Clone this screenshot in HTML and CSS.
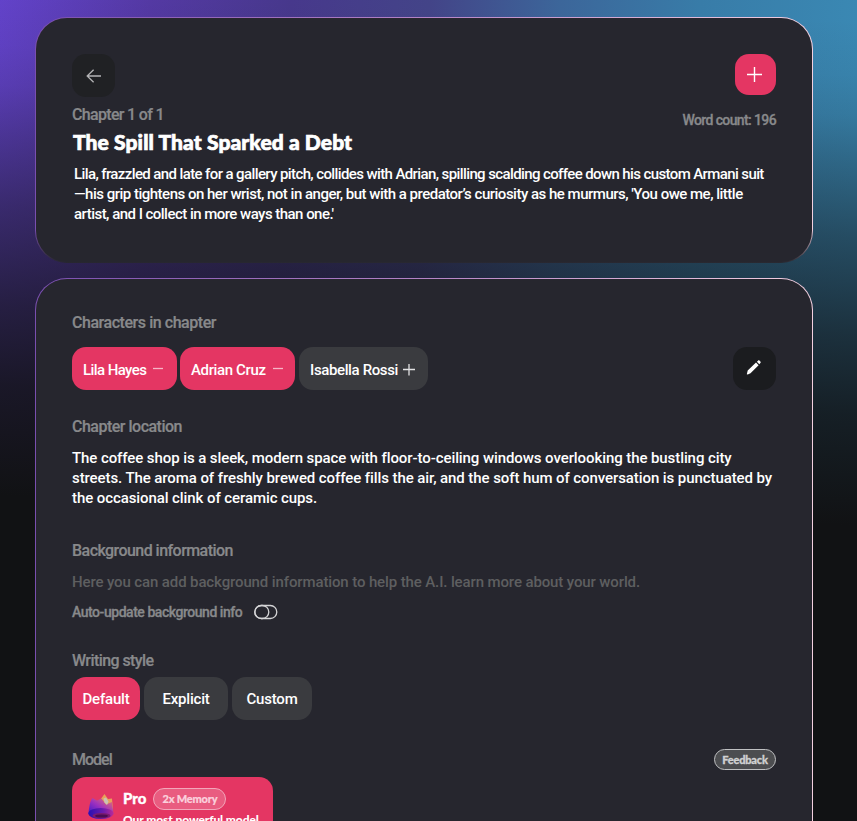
FILE: index.html
```html
<!DOCTYPE html>
<html lang="en">
<head>
<meta charset="utf-8">
<title>Chapter editor</title>
<link rel="stylesheet" href="styles.css">
</head>
<body>
<main class="page">
  <section class="card card-head">
    <div class="head-row">
      <div class="head-left">
        <button class="icon-btn back" aria-label="Back"><svg width="16" height="14" viewBox="0 0 16 14"><path d="M15 7H1.200M7.600 .8L1.200 7l6.400 6.200"/></svg></button>
        <span class="label chapter-no">Chapter 1 of 1</span>
        <h1 class="title">The Spill That Sparked a Debt</h1>
      </div>
      <div class="head-right">
        <button class="icon-btn add" aria-label="Add"><svg width="15" height="15" viewBox="0 0 15 15"><path d="M7.500 0v15M0 7.500h15"/></svg></button>
        <span class="count">Word count: 196</span>
      </div>
    </div>
    <p class="text summary"><span class="s1">Lila, frazzled and late for a gallery pitch, collides with Adrian, spilling scalding coffee down his custom Armani suit</span><span class="s2">—his grip tightens on her wrist, not in anger, but with a predator’s curiosity as he murmurs, 'You owe me, little</span><span class="s3">artist, and I collect in more ways than one.'</span></p>
  </section>

  <section class="card card-body">
    <h2 class="label l-chars">Characters in chapter</h2>
    <div class="row chars">
      <button class="chip on c1"><span>Lila Hayes</span><svg width="10" height="12" viewBox="0 0 10 12"><path d="M0 4.500h10"/></svg></button>
      <button class="chip on c2"><span>Adrian Cruz</span><svg width="10" height="12" viewBox="0 0 10 12"><path d="M0 4.500h10"/></svg></button>
      <button class="chip c3"><span>Isabella Rossi</span><svg width="12" height="12" viewBox="0 0 12 12"><path d="M6 -.5v12M0 5.500h12"/></svg></button>
      <button class="icon-btn edit" aria-label="Edit"><svg width="16" height="16" viewBox="0 0 16 16"><path d="M.8 14.200l.9-3.600 8.300-8 2.600 2.600-8.100 8.100-2.700 1.200zM10.900 1.800L12 .7c.5-.5 1.100-.5 1.600 0l.8.8c.5.5.5 1.100 0 1.600l-1.100 1.100z"/></svg></button>
    </div>
    <h2 class="label l-loc">Chapter location</h2>
    <p class="text location"><span>The coffee shop is a sleek, modern space with floor-to-ceiling windows overlooking the bustling city</span><span>streets. The aroma of freshly brewed coffee fills the air, and the soft hum of conversation is punctuated by</span><span>the occasional clink of ceramic cups.</span></p>
    <h2 class="label l-bg">Background information</h2>
    <p class="text hint">Here you can add background information to help the A.I. learn more about your world.</p>
    <div class="auto"><span>Auto-update background info</span><svg width="24" height="16" viewBox="0 0 24 16"><rect x=".8" y="1.500" width="22" height="13" rx="6.500"/><rect x=".8" y="1.500" width="14" height="13" rx="6.500"/></svg></div>
    <h2 class="label l-style">Writing style</h2>
    <div class="row styles">
      <button class="chip on d1"><span>Default</span></button>
      <button class="chip d2"><span>Explicit</span></button>
      <button class="chip d3"><span>Custom</span></button>
    </div>
    <div class="model-head"><h2 class="label l-model">Model</h2><button class="pill feedback"><span>Feedback</span></button></div>
    <div class="model">
      <svg class="crown" width="28" height="30" viewBox="0 0 28 30">
        <defs>
          <linearGradient id="g" x1="0" y1="1" x2="1" y2="0"><stop offset="0" stop-color="#3a18c8"/><stop offset=".45" stop-color="#9a2fc0"/><stop offset="1" stop-color="#f07a68"/></linearGradient>
          <linearGradient id="h" x1="0" y1="0" x2="1" y2="0"><stop offset="0" stop-color="#2a10b0"/><stop offset=".6" stop-color="#6d1cac"/><stop offset="1" stop-color="#b82a98"/></linearGradient>
        </defs>
        <path fill="#e8a05a" d="M13 9l4.500-6 3.500 5 4-.5 1 12H14z"/>
        <path fill="url(#g)" d="M1.500 23C2 16 3 10 5.500 7l4.500 2.500L14.500 7.500l4.500 6L25 11l1.500 12z"/>
        <path fill="#c9c3b4" d="M16.500 7.500l2.500-1 2.500 4-1.500 3.500-2.500-2.500z"/>
        <ellipse cx="13.900" cy="22.500" rx="12.500" ry="5.500" fill="url(#h)"/>
        <ellipse cx="14.500" cy="24.700" rx="9" ry="2.600" fill="#7a1a70"/>
        <ellipse cx="14.500" cy="25" rx="6.500" ry="1.600" fill="#4a0d52"/>
      </svg>
      <div class="model-info">
        <div class="model-name"><strong>Pro</strong><span class="pill memory"><span>2x Memory</span></span></div>
        <p class="model-desc">Our most powerful model</p>
      </div>
    </div>
  </section>
</main>
</body>
</html>
```
FILE: styles.css
```css
* { box-sizing: border-box; }
html, body { height: 100%; }
body {
  margin: 0;
  overflow: hidden;
  color: #fff;
  font-family: Roboto, "Liberation Sans", sans-serif;
  font-size: 16px;
  background:
    linear-gradient(182deg,
      rgba(17, 18, 20, 0) 20px,
      rgba(17, 18, 20, .05) 75px,
      rgba(17, 18, 20, .13) 115px,
      rgba(17, 18, 20, .29) 165px,
      rgba(17, 18, 20, .5) 235px,
      rgba(17, 18, 20, .62) 285px,
      rgba(17, 18, 20, .74) 335px,
      rgba(17, 18, 20, .89) 415px,
      #111214 525px),
    linear-gradient(92deg, #6343cb 0, #5439a4 150px, #47388c 290px, #434488 430px, #3c669a 560px, #387ca8 700px, #3a88b3 857px);
}
h1, h2, p { margin: 0; }
button {
  padding: 0;
  border: 0;
  color: inherit;
  font: inherit;
}
svg { display: block; flex: none; fill: none; stroke: currentColor; }
.page {
  display: flex;
  flex-direction: column;
  gap: 15px;
  width: 778px;
  height: 100vh;
  margin-left: 35px;
  padding-top: 17px;
  overflow: hidden;
}
.card {
  flex: none;
  padding: 36px;
  border: 1px solid transparent;
  border-radius: 32px;
  background:
    linear-gradient(#26262e, #26262e) padding-box,
    linear-gradient(90deg, #7a4fb0, #b483c6 50%, #f3d0e0) border-box;
}
.card-head {
  height: 246px;
  background:
    linear-gradient(#26262e, #26262e) padding-box,
    linear-gradient(180deg, rgba(38, 38, 46, 0) 86%, #26262e 100%) border-box,
    linear-gradient(90deg, #7a4fb0, #b483c6 50%, #f3d0e0) border-box;
}
.card-body { height: 700px; }
.head-row { display: flex; justify-content: space-between; }
.head-left { display: flex; flex-direction: column; }
.head-right { display: flex; flex-direction: column; align-items: flex-end; }
.icon-btn {
  display: grid;
  place-items: center;
  width: 43px;
  height: 43px;
  border-radius: 14px;
}
.back { background: #202124; color: #b4b4b6; stroke-width: 1.3; }
.add { width: 41px; height: 41px; padding: 0 2px 0 0; background: #e43663; stroke-width: 1.4; }
.edit { margin-left: auto; padding: 0 1px 1px 0; background: #1b1c1f; }
.edit svg { fill: #fff; stroke: none; }
.label {
  height: 16px;
  color: #88898b;
  font-size: 16px;
  font-weight: 500;
  letter-spacing: -.5px;
  line-height: 16px;
  white-space: nowrap;
  -webkit-text-stroke: .2px;
}
.l-chars { letter-spacing: -.45px; }
.chapter-no { margin-top: 10px; letter-spacing: -.67px; }
.title {
  margin: 7px 0 1px 1px;
  font-family: Lato, sans-serif;
  font-size: 21px;
  font-weight: 900;
  letter-spacing: .1px;
  line-height: 24px;
  white-space: nowrap;
  -webkit-text-stroke: .7px #fff;
}
.count {
  margin-top: 17px;
  color: #88898b;
  font-size: 14px;
  font-weight: 500;
  letter-spacing: -.62px;
  line-height: 17px;
  -webkit-text-stroke: .3px;
}
.text { font-size: 15px; font-weight: 500; line-height: 20px; }
.text span { display: block; width: max-content; white-space: nowrap; }
.summary { margin: 9px 0 0 2px; }
.s1 { letter-spacing: -.61px; }
.s2 { letter-spacing: -.5px; }
.s3 { letter-spacing: -.53px; }
.row { display: flex; }
.chars { margin-top: 16px; }
.chip {
  display: flex;
  align-items: center;
  height: 43px;
  padding: 2px 0 0 11px;
  border-radius: 14px;
  background: #3a3b3f;
  font-size: 15px;
  font-weight: 500;
  letter-spacing: -.37px;
  white-space: nowrap;
}
.chip.on { background: #e43663; }
.chip svg { color: #e2e2e4; stroke-width: 1.3; }
.chip.on svg { color: #f6b5c5; }
.c1 { width: 105px; margin-right: 3px; letter-spacing: -.58px; }
.c2 { width: 115px; margin-right: 4px; }
.c3 { width: 129px; }
.c1 svg, .c2 svg { margin-left: 7px; }
.c3 svg { margin-left: 5px; }
.l-loc { margin-top: 29px; }
.location { margin-top: 13px; letter-spacing: -.085px; }
.l-bg { margin-top: 35px; letter-spacing: -.55px; }
.hint { margin-top: 13px; color: #5e5f60; letter-spacing: -.12px; }
.auto {
  display: flex;
  align-items: center;
  height: 20px;
  margin-top: 10px;
  color: #88898b;
  font-size: 14px;
  font-weight: 500;
  letter-spacing: -.46px;
}
.auto span { -webkit-text-stroke: .3px; }
.auto svg { margin-left: 12px; color: #d4d4d6; stroke-width: 1.3; }
.l-style { margin-top: 31px; letter-spacing: -.58px; }
.styles { gap: 4px; margin-top: 8px; }
.styles .chip { justify-content: center; padding: 0; letter-spacing: -.2px; }
.d1 { width: 68px; }
.d2 { width: 84px; }
.d3 { width: 80px; }
.model-head {
  display: flex;
  justify-content: space-between;
  margin-top: 29px;
}
.l-model { margin-top: 3px; letter-spacing: -1px; }
.pill {
  display: grid;
  place-items: center;
  border: 1px solid #bfc0c2;
  border-radius: 11px;
  font-family: Lato, sans-serif;
  font-weight: 900;
  line-height: 14px;
  letter-spacing: -.2px;
}
.feedback { width: 62px; height: 21px; background: #4c4d50; color: #d0d1d2; font-size: 11px; -webkit-text-stroke: .3px; }
.model {
  display: flex;
  width: 201px;
  height: 110px;
  margin-top: 7px;
  padding: 11px 0 0 15px;
  border-radius: 14px;
  background: #e43663;
}
.crown { stroke: none; margin-top: 3px; }
.model-info { margin-left: 8px; }
.model-name { display: flex; align-items: center; gap: 7px; height: 22px; }
.model-name strong { height: 22px; font: 900 15px/20px Lato, sans-serif; -webkit-text-stroke: .3px; }
.memory { width: 73px; height: 22px; border-color: #f3a6ba; background: #e95c80; color: #fbd0dc; font-size: 11px; -webkit-text-stroke: .2px; }
.model-desc { margin-top: 3px; font: 900 12px/14px Lato, sans-serif; letter-spacing: -.1px; white-space: nowrap; }
```
